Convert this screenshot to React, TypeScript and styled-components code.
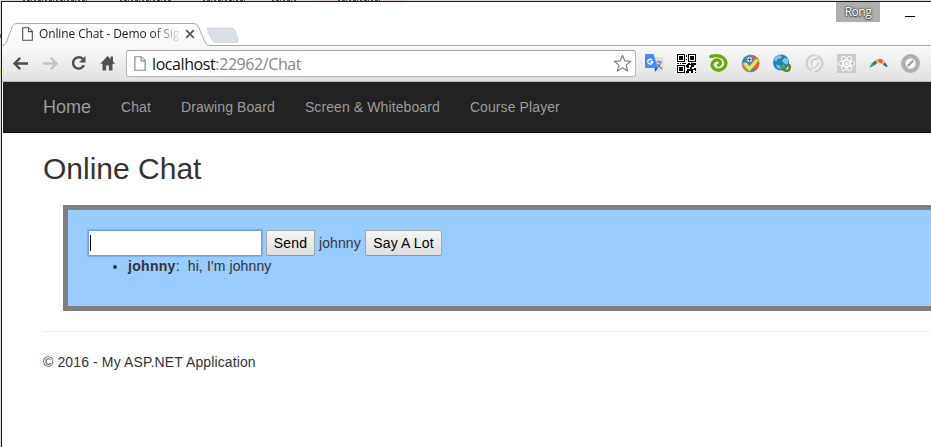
import React from "react";
import styled, { createGlobalStyle } from "styled-components";

const GlobalStyle = createGlobalStyle`
  *, *::before, *::after { box-sizing: border-box; }
  html, body { margin: 0; padding: 0; overflow: hidden; }
  body { font: 14px/20px "Liberation Sans", Arial, sans-serif; color: #333; background: #fff; }
`;

const Desktop = styled.div`
  position: relative;
  width: 931px;
  height: 447px;
  padding: 1px 0 0 1px;
  background: #d9dbda;
  overflow: hidden;
`;

const Behind = styled.svg`
  position: absolute;
  left: 0;
  top: 0;
`;

const Window = styled.div`
  position: relative;
  display: flex;
  flex-direction: column;
  height: 446px;
  border: solid #17191b;
  border-width: 1px 0 0 1px;
  background: #fff;
`;

const TabStrip = styled.div`
  position: relative;
  display: flex;
  align-items: flex-end;
  flex: none;
  height: 44px;
`;

const TabShape = styled.svg`
  position: absolute;
  left: 0;
  bottom: 0;
`;

const Tab = styled.div`
  position: relative;
  display: flex;
  align-items: center;
  width: 205px;
  height: 24px;
  padding-left: 20px;

  svg { flex: none; }
`;

const TabTitle = styled.div`
  flex: none;
  width: 147px;
  padding-left: 6px;
  margin-right: 5px;
  font: 12px/18px "Open Sans", "Noto Sans", sans-serif;
  letter-spacing: -0.12px;
  white-space: nowrap;
  color: #222;
  mask-image: linear-gradient(90deg, #000 118px, transparent 149px);
`;

const ProfileBadge = styled.div`
  position: absolute;
  left: 834px;
  top: 0;
  width: 44px;
  height: 20px;
  background: #afafaf;
  color: #fff;
  text-align: center;
  font: 12px/20px "Open Sans", "Noto Sans", sans-serif;
  letter-spacing: -0.45px;
  text-shadow: 0 0 2px #333, 0 0 2px #555, 0 1px 1px #555;
`;

const Minimize = styled.div`
  position: absolute;
  left: 903px;
  top: 14px;
  width: 10px;
  height: 1px;
  background: #000;
`;

const Toolbar = styled.div`
  display: flex;
  align-items: center;
  flex: none;
  height: 36px;
  padding: 0 0 1px 10px;
  background: linear-gradient(#f9f9f9, #e1e1e1);
  border-bottom: 1px solid #b3b5b6;
`;

const NavIcons = styled.div`
  display: flex;
  gap: 11px;
  width: 114px;
`;

const AddressBar = styled.div`
  display: flex;
  align-items: center;
  width: 510px;
  height: 27px;
  margin-top: 1px;
  padding: 0 3px 0 7px;
  border: 1px solid #b8b8b8;
  border-top-color: #a2a2a2;
  border-radius: 3px;
  background: #fff;
`;

const Url = styled.div`
  flex: 1;
  padding-left: 6px;
  font: 16px/22px "Open Sans", "Noto Sans", sans-serif;
  letter-spacing: -0.41px;
  color: #858585;
`;

const Host = styled.span`
  color: #111;
`;

const Extensions = styled.div`
  display: flex;
  gap: 12px;
  margin-left: 8px;
`;

const Page = styled.div`
  flex: 1;
  margin-left: 1px;
  background: #fff;
`;

const SiteNav = styled.nav`
  display: flex;
  height: 51px;
  padding-left: 25px;
  background: #222;
  border-bottom: 1px solid #080808;
`;

const NavLink = styled.a<{ $brand?: boolean }>`
  padding: 15px;
  color: #9d9d9d;
  font-size: ${(p) => (p.$brand ? "18px" : "14px")};
  line-height: 20px;
  letter-spacing: ${(p) => (p.$brand ? "0" : "0.1px")};
  white-space: nowrap;
`;

const Body = styled.main`
  width: 1000px;
  padding-left: 40px;
`;

const Title = styled.h2`
  margin: 0;
  padding: 19px 0 20px;
  font-weight: 400;
  font-size: 30px;
  line-height: 33px;
`;

const ChatBox = styled.section`
  height: 106px;
  margin-left: 20px;
  padding: 20px;
  border: 5px solid #808080;
  background: #99ccff;
`;

const ChatForm = styled.div`
  display: flex;
  height: 26px;
  line-height: 26px;
`;

const MessageInput = styled.div`
  width: 174px;
  height: 26px;
  margin-right: 4px;
  padding: 4px 1px;
  border: 1px solid #6d9eeb;
  border-radius: 1px;
  box-shadow: 0 0 1px 0.5px #7cadf4;
  background: #fff;
`;

const Caret = styled.div`
  width: 1px;
  height: 16px;
  background: #000;
`;

const Button = styled.button<{ $width: number }>`
  width: ${(p) => p.$width}px;
  height: 26px;
  padding: 0;
  border: 1px solid #a6a6a6;
  border-bottom-color: #959595;
  border-radius: 2px;
  background: linear-gradient(#f6f6f6, #dedede);
  color: #000;
  font: 14px/20px "Liberation Sans", Arial, sans-serif;
  letter-spacing: 0.15px;
`;

const UserName = styled.span`
  width: 50px;
  padding-left: 4px;
  letter-spacing: 0.1px;
`;

const Messages = styled.ul`
  margin: 0 0 10px;
  padding-left: 40px;
`;

const Message = styled.li`
  white-space: pre;
  letter-spacing: 0.12px;
`;

const Author = styled.b`
  letter-spacing: 0.3px;
`;

const Footer = styled.footer`
  margin-top: 20px;
  padding-top: 20px;
  border-top: 1px solid #eee;
  letter-spacing: 0.12px;
`;

const Sheet = ({ w, h, stroke }: { w: number; h: number; stroke: string }) => (
  <svg width={w} height={h} viewBox="0 0 11 14" fill="#fff" stroke={stroke} strokeWidth="1.1">
    <path d="M.7.7h6L10.3 4.3v9H.7z" />
    <path d="M6.5.8v3.8h3.7" />
  </svg>
);

const Arrow = ({ color, flip }: { color: string; flip?: boolean }) => (
  <svg width="18" height="18" viewBox="0 0 18 18" fill="none" stroke={color} strokeWidth="2.4">
    <path transform={flip ? "translate(18 0) scale(-1 1)" : undefined} d="M16 9.5H2.6M8.2 3.8 2.5 9.5l5.7 5.7" />
  </svg>
);

const marks = [
  [23, 66], [120, 52], [203, 42], [272, 26], [338, 44],
];

export default function App() {
  return (
    <Desktop>
      <GlobalStyle />
      <Behind width="931" height="447">
        <path fill="#dccaca" d="M316 0h90v1h-90z" />
        {marks.map(([x, w]) => (
          <path key={x} d={`M${x} .5h${w}`} stroke="#555" strokeDasharray="2 2 3 1 1 2" />
        ))}
        <path fill="#e4e000" d="M0 69h1v5H0z" />
        <path fill="#666" d="M0 34h1v4H0z" />
      </Behind>
      <Window>
        <TabStrip>
          <TabShape width="929" height="24" viewBox="0 0 929 24">
            <defs>
              <linearGradient id="tab" x1="0" y1="0" x2="0" y2="1">
                <stop offset="0" stopColor="#fff" />
                <stop offset="1" stopColor="#f7f7f7" />
              </linearGradient>
            </defs>
            <path
              d="M0 23.5Q3 23.5 4.5 20L10.5 4Q11.8 1.5 15 1.5H192Q195 1.5 196.5 5l6.5 15q1.4 3.5 4.5 3.5H929V25H0z"
              fill="url(#tab)" stroke="#a9a9a9"
            />
            <path d="M205 6h25q2 0 3 2.2l3 9q1 3.3-2 3.3h-20q-3 0-4-2.5l-4.5-10q-.7-2 -.5-2z" fill="#d9dfe7" stroke="#cbd1d8" strokeWidth=".7" />
          </TabShape>
          <Tab>
            <Sheet w={11} h={14} stroke="#4e4e4e" />
            <TabTitle>Online Chat - Demo of Sig</TabTitle>
            <svg width="10" height="10" viewBox="0 0 10 10" stroke="#555" strokeWidth="1.8">
              <path d="m1.2 1.2 7.6 7.6m0-7.6L1.2 8.8" />
            </svg>
          </Tab>
          <ProfileBadge>Rong</ProfileBadge>
          <Minimize />
        </TabStrip>
        <Toolbar>
          <NavIcons>
            <Arrow color="#4f4f4f" />
            <Arrow color="#c2c2c2" flip />
            <svg width="18" height="18" viewBox="0 0 18 18">
              <path d="M12.9 5A5.7 5.7 0 1 0 13.9 11.3" fill="none" stroke="#505050" strokeWidth="2.5" />
              <path d="M15.5 2v6.5H9z" fill="#505050" />
            </svg>
            <svg width="18" height="18" viewBox="0 0 18 18" fill="#505050">
              <path d="M8.7 2 1.3 9.7H3.5V16.5h3.6v-5h2.8v5h3.6V9.7h2.7L14 7.5V2.5h-2.4v2.7z" />
            </svg>
          </NavIcons>
          <AddressBar>
            <Sheet w={12} h={15} stroke="#888" />
            <Url><Host>localhost</Host>:22962/Chat</Url>
            <svg width="19" height="19" viewBox="0 0 19 19" fill="#fff" stroke="#808080" strokeWidth="1.2" strokeLinejoin="round">
              <path d="m9.5 1.3 2.2 5.6 6 .4-4.6 3.8 1.5 5.9-5.1-3.2L4.4 17l1.5-5.9-4.6-3.8 6-.4z" />
            </svg>
          </AddressBar>
          <Extensions>
            <svg width="20" height="20" viewBox="0 0 20 20">
              <path d="M9 4h10.5v14.5H12z" fill="#dedede" />
              <path d="M1.5 1h8L14 15H1.5Q1 15 1 14V1.5z" fill="#4a8af4" />
              <path d="M10.5 15H14l-3 4z" fill="#3a50b5" />
              <path d="M12.3 9h5.8M15 7.5V9m2 0q-.7 3.5-4 6m.5-4q1.5 3 4.7 5" stroke="#60798c" strokeWidth="1.1" fill="none" />
              <path d="M8 7a2.4 2.4 0 1 0 .6 1.8H6.4" stroke="#fff" strokeWidth="1.4" fill="none" />
            </svg>
            <svg width="20" height="20" viewBox="0 0 20 20" shapeRendering="crispEdges">
              <path fill="#fff" d="M0 0h20v20H0z" />
              <path fill="#000" fillRule="evenodd" d="M1 1h8v8H1zM2 2v6h6V2zM3 3h4v4H3zM12 1h8v8h-8zM13 2v6h6V2zM14 3h4v4h-4zM1 12h8v8H1zM2 13v6h6v-6zM3 14h4v4H3zM10 2h1v2h-1zM10 6h1v1h-1zM1 10h2v1H1zM4 10h1v1H4zM6 10h4v1H6zM12 10h2v1h-2zM15 10h5v2h-2v2h-3v-2h-2v3h-2v-4h4zM10 12h1v2h-1zM11 16h3v-2h2v2h2v-1h2v3h-1v-1h-2v2h-2v-1h-4zM10 18h3v2h-3zM15 19h2v1h-2zM19 19h1v1h-1z" />
            </svg>
            <svg width="20" height="20" viewBox="0 0 20 20" fill="none">
              <path d="M3 3.4Q10 1.4 15 4.7q5.2 4.7 1.2 9.7-4 4.4-9 2-4.7-3-2.4-7 2.8-4 6.4-1.7 3 3-.7 4.5" stroke="#68a90b" strokeWidth="3.2" strokeLinecap="round" />
              <path d="m1 4.5 2-2.7 2.3 3.2z" fill="#68a90b" />
            </svg>
            <svg width="20" height="20" viewBox="0 0 20 20">
              <circle cx="10.5" cy="10.5" r="8.8" fill="#3989c9" />
              <path d="M9 1.8a8.8 8.8 0 0 1 5.5 16.5l-2-7z" fill="#df6535" />
              <path d="M2 10q0 7 6.5 9l-2-7z" fill="#df7a50" />
              <circle cx="9.5" cy="6.5" r="3.2" fill="#dceaff" stroke="#376ea6" />
              <path d="M7.5 6.5h4M9.5 4.5v4" stroke="#376ea6" />
              <path d="m2.5 10.5 3.8-1.3L9.5 13 16 5.5l3.2 1.8L9.5 18.8z" fill="#d8e86a" stroke="#91ac2d" strokeWidth=".6" />
            </svg>
            <svg width="20" height="20" viewBox="0 0 20 20">
              <circle cx="9" cy="9.5" r="8" fill="#2382bd" />
              <path d="M2 6.5q2-4 6-4.5l2 2-2 2-2-.5-2 3zM10 7.5l3-3 3 2v5l-4-1zM4 11.5l4 1 1 4-4-2z" fill="#76c7ec" />
              <path d="M15.5 11.3a3.3 3.3 0 1 1-4.3 3" fill="none" stroke="#548c20" strokeWidth="2.5" />
              <path d="M8.6 14.5h5l-2.5-3.4z" fill="#75a934" />
            </svg>
            <svg width="20" height="20" viewBox="0 0 20 20" fill="none" strokeLinecap="round">
              <circle cx="10.5" cy="10.5" r="9" fill="#e0e0e0" />
              <path d="M10 2.3Q2.5 3.5 2.5 11q.5 4.5 4.5 6" stroke="#cfcfcf" strokeWidth="2" />
              <path d="M14.5 3.3q5 4 3.8 9-2 5.5-7.3 6" stroke="#cecece" strokeWidth="2" />
              <path d="M12.5 3.5Q5.5 4 5.5 10q0 3 2.5 5M13.5 6q2.5 2 2 5.5-1.5 5-6.5 5.8" stroke="#f3f3f3" strokeWidth="1.3" />
              <path d="M13.5 5.8Q7.5 6 7.3 11q.2 2.7 1.8 3.6 4.7-1 4.9-5.1" stroke="#b9b9b9" strokeWidth="1" />
              <ellipse cx="10.6" cy="10.6" rx="2.4" ry="3.7" transform="rotate(28 10.6 10.6)" fill="#efefef" />
            </svg>
            <svg width="20" height="20" viewBox="0 0 20 20" fill="none" stroke="#fff" strokeWidth="1">
              <path fill="#cacaca" stroke="none" d="M1 1h19v19H1z" />
              {[30, 90, 150].map((a) => (
                <ellipse key={a} cx="10.5" cy="10.5" rx="8.2" ry="3.1" transform={`rotate(${a - 30} 10.5 10.5)`} />
              ))}
              <circle cx="10.5" cy="10.5" r="1.3" fill="#fff" />
            </svg>
            <svg width="20" height="20" viewBox="0 0 20 20">
              <path d="m1 14.5 3-4.2 3-2 .6 3.2-3.2 2z" fill="#4b9d5b" />
              <path d="m4.4 10 3.8-3 .8 3.5-3 1.8z" fill="#2374ad" />
              <path d="M7.7 7.3 10.2 6l1 3.6-2.6 1.2z" fill="#eeaa39" />
              <path d="M10.2 6h3.3l2.2 2-1.7 2.8L11.2 9.5z" fill="#ec5c46" />
              <path d="m14.9 7.3 2.5 2.6-1.8 2.2-2.2-1.8z" fill="#f0ad3e" />
              <path d="m16.8 9.2 3.1 4-1.4.8-3.5-2.3z" fill="#2366a1" />
            </svg>
            <svg width="20" height="20" viewBox="0 0 20 20">
              <circle cx="10.5" cy="10.5" r="7.3" fill="#f7f7f7" stroke="#b0b0b0" strokeWidth="4.3" />
              <path d="m7.2 13.9.7-2.4 4.6-4.6 1.4 1.4-4.6 4.7z" fill="#999" />
            </svg>
          </Extensions>
        </Toolbar>
        <Page>
          <SiteNav>
            <NavLink $brand>Home</NavLink>
            <NavLink>Chat</NavLink>
            <NavLink>Drawing Board</NavLink>
            <NavLink>Screen &amp; Whiteboard</NavLink>
            <NavLink>Course Player</NavLink>
          </SiteNav>
          <Body>
            <Title>Online Chat</Title>
            <ChatBox>
              <ChatForm>
                <MessageInput><Caret /></MessageInput>
                <Button $width={49}>Send</Button>
                <UserName>johnny</UserName>
                <Button $width={77}>Say A Lot</Button>
              </ChatForm>
              <Messages>
                <Message><Author>johnny</Author>:{"  "}hi, I'm johnny</Message>
              </Messages>
            </ChatBox>
            <Footer>© 2016 - My ASP.NET Application</Footer>
          </Body>
        </Page>
      </Window>
    </Desktop>
  );
}
